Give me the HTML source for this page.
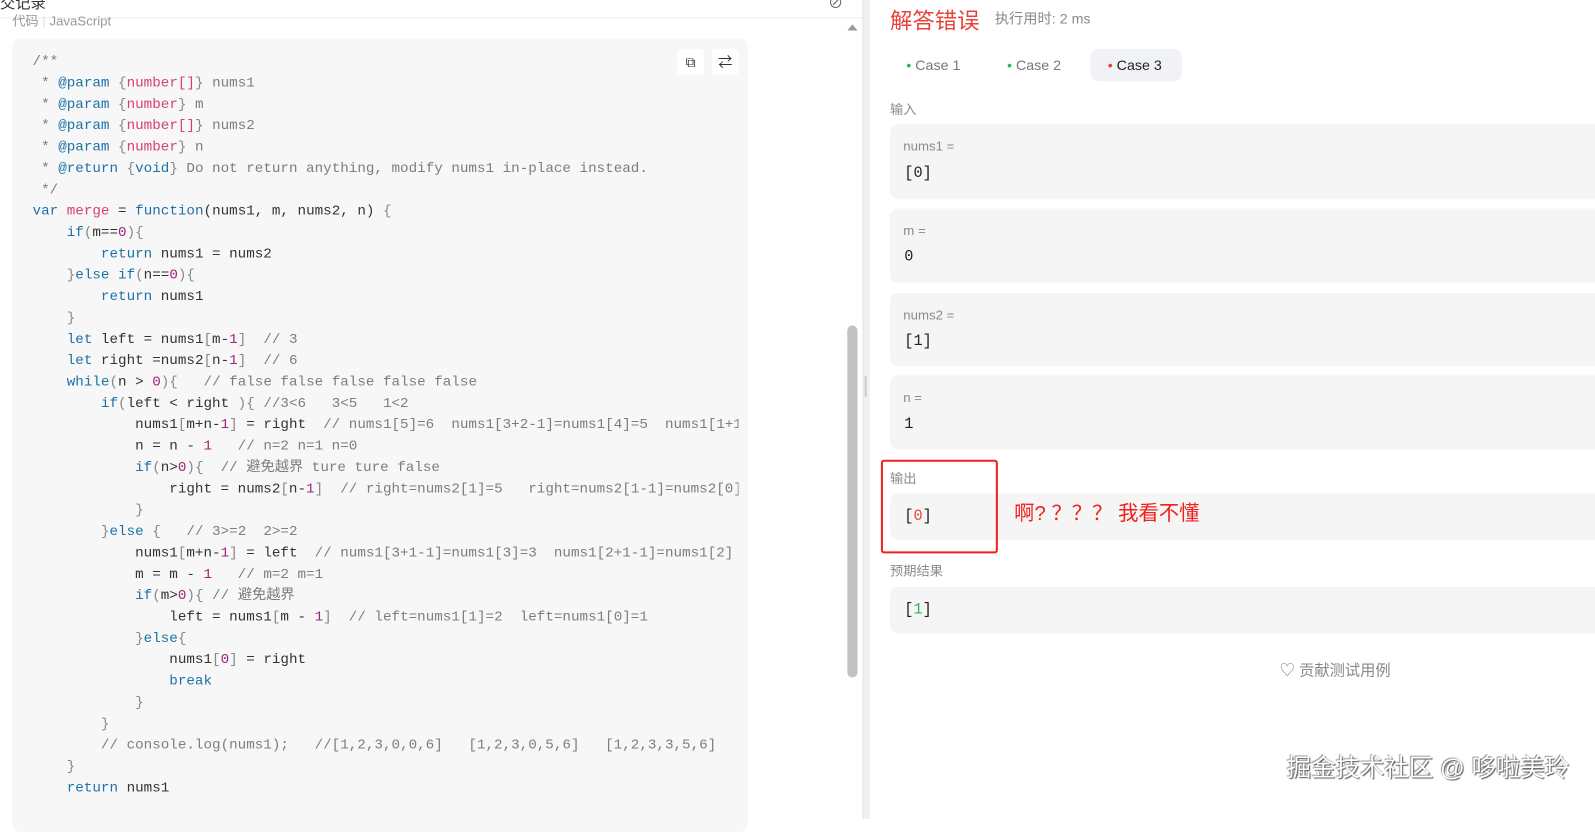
<!DOCTYPE html><html><head><meta charset="utf-8"><style>
*{margin:0;padding:0;box-sizing:border-box}
html,body{width:1595px;height:805px;overflow:hidden;background:#fff}
body{font-family:"Liberation Sans","Noto Sans CJK SC",sans-serif}
#w{position:absolute;left:0;top:0;width:1568px;height:792px;transform:scale(1.0172);transform-origin:0 0}
.abs{position:absolute}
pre{font-family:"Liberation Mono","Noto Sans CJK SC",monospace;font-size:14px;line-height:21px;color:#333;white-space:pre}
.k{color:#1b72a6}.f{color:#d6426b}.n{color:#a0247e}.c{color:#7d7d7d}.p{color:#888}
.lab{position:absolute;left:875px;font-size:13px;color:#8a8a8a}
.card{position:absolute;left:875px;width:720px;background:#f5f5f5;border-radius:8px}
.card .v{font-size:13px;color:#8a8a8a;position:absolute;left:13px;top:14px}
.card .d{font-family:"Liberation Mono",monospace;font-size:15px;color:#222;position:absolute;left:14px}
</style></head><body><div id="w">
<div class="abs" style="left:0;top:-8px;font-size:15px;color:#333">交记录</div>
<div class="abs" style="left:0;top:17px;width:848px;height:1px;background:#eee"></div>
<div class="abs" style="left:814px;top:-8px;font-size:15px;color:#666">⊘</div>
<div class="abs" style="left:12px;top:10px;font-size:13px;color:#999">代码 <span style="color:#ddd">|</span> JavaScript</div>
<div class="abs" style="left:833px;top:24px;width:0;height:0;border-left:5px solid transparent;border-right:5px solid transparent;border-bottom:6px solid #999"></div>
<div class="abs" style="left:12px;top:38px;width:723px;height:780px;background:#f7f7f8;border-radius:8px"></div>
<div class="abs" style="left:666px;top:48px;width:26px;height:26px;background:#fff;border-radius:4px;font-size:14px;text-align:center;line-height:26px;color:#333">⧉</div>
<div class="abs" style="left:700px;top:48px;width:26px;height:26px;background:#fff;border-radius:4px;font-size:14px;text-align:center;line-height:26px;color:#333">⇄</div>
<pre class="abs" style="left:32px;top:51px;width:694px;overflow:hidden"><span class="c">/**
 * <span class="k">@param</span> <span class="p">{</span><span class="f">number[]</span><span class="p">}</span> nums1
 * <span class="k">@param</span> <span class="p">{</span><span class="f">number</span><span class="p">}</span> m
 * <span class="k">@param</span> <span class="p">{</span><span class="f">number[]</span><span class="p">}</span> nums2
 * <span class="k">@param</span> <span class="p">{</span><span class="f">number</span><span class="p">}</span> n
 * <span class="k">@return</span> <span class="p">{</span><span class="k">void</span><span class="p">}</span> Do not return anything, modify nums1 in-place instead.
 */</span>
<span class="k">var</span> <span class="f">merge</span> = <span class="k">function</span>(nums1, m, nums2, n) <span class="p">{</span>
    <span class="k">if</span><span class="p">(</span>m==<span class="n">0</span><span class="p">){</span>
        <span class="k">return</span> nums1 = nums2
    <span class="p">}</span><span class="k">else if</span><span class="p">(</span>n==<span class="n">0</span><span class="p">){</span>
        <span class="k">return</span> nums1
    <span class="p">}</span>
    <span class="k">let</span> left = nums1<span class="p">[</span>m-<span class="n">1</span><span class="p">]</span>  <span class="c">// 3</span>
    <span class="k">let</span> right =nums2<span class="p">[</span>n-<span class="n">1</span><span class="p">]</span>  <span class="c">// 6</span>
    <span class="k">while</span><span class="p">(</span>n &gt; <span class="n">0</span><span class="p">){</span>   <span class="c">// false false false false false</span>
        <span class="k">if</span><span class="p">(</span>left &lt; right <span class="p">){</span> <span class="c">//3&lt;6   3&lt;5   1&lt;2</span>
            nums1<span class="p">[</span>m+n-<span class="n">1</span><span class="p">]</span> = right  <span class="c">// nums1[5]=6  nums1[3+2-1]=nums1[4]=5  nums1[1+1-1]</span>
            n = n - <span class="n">1</span>   <span class="c">// n=2 n=1 n=0</span>
            <span class="k">if</span><span class="p">(</span>n&gt;<span class="n">0</span><span class="p">){</span>  <span class="c">// 避免越界 ture ture false</span>
                right = nums2<span class="p">[</span>n-<span class="n">1</span><span class="p">]</span>  <span class="c">// right=nums2[1]=5   right=nums2[1-1]=nums2[0]</span>
            <span class="p">}</span>
        <span class="p">}</span><span class="k">else</span> <span class="p">{</span>   <span class="c">// 3&gt;=2  2&gt;=2</span>
            nums1<span class="p">[</span>m+n-<span class="n">1</span><span class="p">]</span> = left  <span class="c">// nums1[3+1-1]=nums1[3]=3  nums1[2+1-1]=nums1[2]</span>
            m = m - <span class="n">1</span>   <span class="c">// m=2 m=1</span>
            <span class="k">if</span><span class="p">(</span>m&gt;<span class="n">0</span><span class="p">){</span> <span class="c">// 避免越界</span>
                left = nums1<span class="p">[</span>m - <span class="n">1</span><span class="p">]</span>  <span class="c">// left=nums1[1]=2  left=nums1[0]=1</span>
            <span class="p">}</span><span class="k">else</span><span class="p">{</span>
                nums1<span class="p">[</span><span class="n">0</span><span class="p">]</span> = right
                <span class="k">break</span>
            <span class="p">}</span>
        <span class="p">}</span>
        <span class="c">// console.log(nums1);   //[1,2,3,0,0,6]   [1,2,3,0,5,6]   [1,2,3,3,5,6]</span>
    <span class="p">}</span>
    <span class="k">return</span> nums1</pre>
<div class="abs" style="left:833px;top:320px;width:10px;height:346px;background:#c1c1c1;border-radius:5px"></div>
<div class="abs" style="left:848px;top:0;width:7px;height:805px;background:#f0f0f0;border-left:1px solid #e4e4e4"></div>
<div class="abs" style="left:850px;top:370px;width:2px;height:20px;background:#ccc"></div>

<div class="abs" style="left:875px;top:3px;font-size:22px;color:#e8423a">解答错误</div>
<div class="abs" style="left:978px;top:8px;font-size:14px;color:#888">执行用时: 2 ms</div>
<div class="abs" style="left:891px;top:56px;font-size:14px;color:#777"><span style="color:#2db55d">•</span> Case 1</div>
<div class="abs" style="left:990px;top:56px;font-size:14px;color:#777"><span style="color:#2db55d">•</span> Case 2</div>
<div class="abs" style="left:1072px;top:48px;width:90px;height:32px;background:#f0f2f5;border-radius:8px"></div>
<div class="abs" style="left:1089px;top:56px;font-size:14px;color:#222"><span style="color:#e8423a">•</span> Case 3</div>
<div class="lab" style="top:97px">输入</div>
<div class="card" style="top:122px;height:74px"><div class="v">nums1 =</div><div class="d" style="top:40px">[0]</div></div>
<div class="card" style="top:205px;height:73px"><div class="v">m =</div><div class="d" style="top:39px">0</div></div>
<div class="card" style="top:288px;height:72px"><div class="v">nums2 =</div><div class="d" style="top:39px">[1]</div></div>
<div class="card" style="top:369px;height:73px"><div class="v">n =</div><div class="d" style="top:40px">1</div></div>
<div class="lab" style="top:460px">输出</div>
<div class="card" style="top:485px;height:46px"><div class="d" style="top:14px">[<span style="color:#e8423a">0</span>]</div></div>
<div class="abs" style="left:866px;top:452px;width:115px;height:92px;border:2px solid #f0201c;border-radius:3px"></div>
<div class="abs" style="left:997px;top:488px;font-size:20px;color:#f0201c">啊? ？？？ 我看不懂</div>
<div class="lab" style="top:551px">预期结果</div>
<div class="card" style="top:577px;height:46px"><div class="d" style="top:14px">[<span style="color:#2db55d">1</span>]</div></div>
<div class="abs" style="left:1258px;top:648px;font-size:15px;color:#888">♡ 贡献测试用例</div>
<div class="abs" style="left:1265px;top:735px;font-size:24px;color:#fff;text-shadow:1px 1px 1px #555,-1px -1px 1px #999">掘金技术社区 @ 哆啦美玲</div>
</div></body></html>
